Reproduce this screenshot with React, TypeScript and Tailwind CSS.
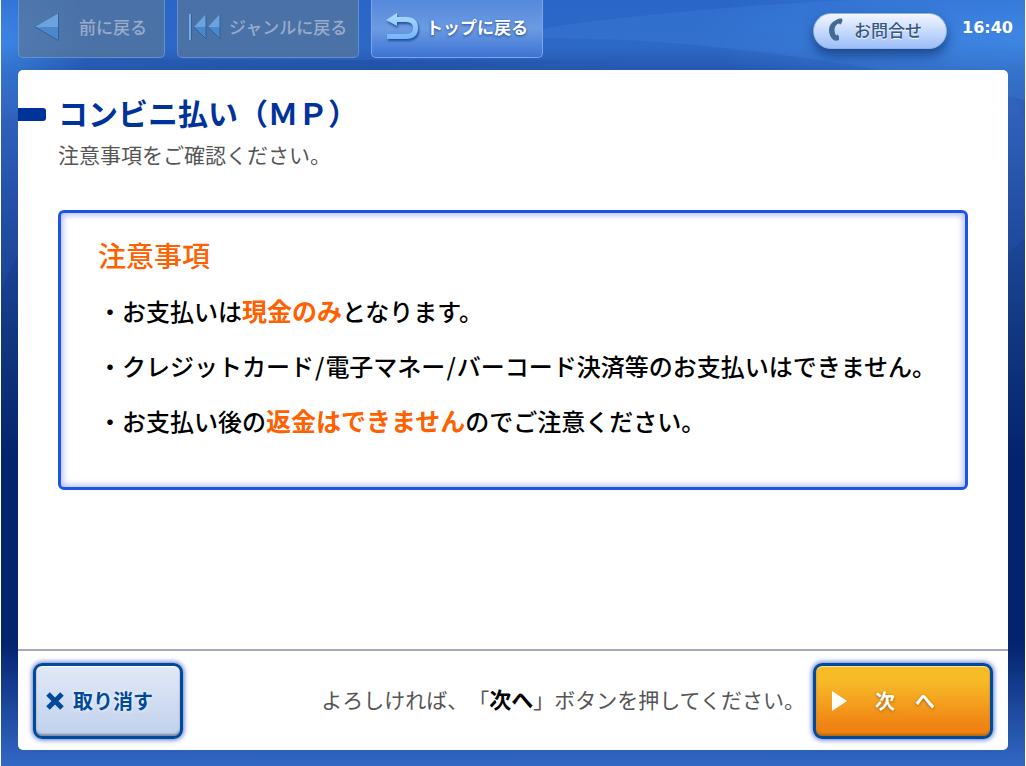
import React from "react";

const font = "font-['Noto_Sans_CJK_JP',sans-serif]";

function Backdrop() {
  return (
    <svg
      className="absolute inset-0 h-full w-full"
      viewBox="0 0 1024 766"
      preserveAspectRatio="none"
      aria-hidden="true"
    >
      <defs>
        <linearGradient id="bg" x1="0" y1="0" x2="0" y2="1">
          <stop offset="0" stopColor="#2a66c8" />
          <stop offset="0.06" stopColor="#2d68c6" />
          <stop offset="0.09" stopColor="#2659b0" />
          <stop offset="0.14" stopColor="#2f5fb9" />
          <stop offset="0.28" stopColor="#1f4a9e" />
          <stop offset="0.45" stopColor="#11357f" />
          <stop offset="0.6" stopColor="#04236f" />
          <stop offset="0.84" stopColor="#04236f" />
          <stop offset="0.97" stopColor="#2a5cb5" />
          <stop offset="1" stopColor="#3068c4" />
        </linearGradient>
        <radialGradient id="glow">
          <stop offset="0" stopColor="#4290f0" stopOpacity="0.7" />
          <stop offset="1" stopColor="#4290f0" stopOpacity="0" />
        </radialGradient>
        <linearGradient id="shade" x1="0" y1="0" x2="1" y2="0">
          <stop offset="0" stopColor="#1c4c9c" stopOpacity="0" />
          <stop offset="0.6" stopColor="#1c4c9c" stopOpacity="0.5" />
          <stop offset="1" stopColor="#1c4c9c" stopOpacity="0" />
        </linearGradient>
      </defs>
      <rect width="1024" height="766" fill="url(#bg)" />
      <ellipse cx="0" cy="40" rx="90" ry="80" fill="url(#glow)" />
      <ellipse cx="1024" cy="35" rx="330" ry="70" fill="url(#glow)" />
      <path d="M370 70 Q500 30 620 18 Q740 5 850 0 H1024 V100 Q760 38 540 38 Q440 50 370 70Z" fill="#4a8ce4" fillOpacity="0.22" />
      <path d="M0 45 Q70 58 200 60 H640 V70 H0 Z" fill="url(#shade)" />
      <path d="M0 292 Q8 270 17 256 V80 H0Z" fill="#4a8ce4" fillOpacity="0.08" />
      <path d="M1007 254 Q1016 246 1024 238 V120 L1007 82Z" fill="#4a8ce4" fillOpacity="0.08" />
    </svg>
  );
}

function BackIcon() {
  return (
    <svg className="h-7 w-6" viewBox="0 0 24 28" aria-hidden="true">
      <path d="M0 14 24 0V14Z" fill="#6ba3dc" />
      <path d="M0 14H24V28Z" fill="#4b87cb" />
      <path d="M23.5 0V27.5L0 14" fill="none" stroke="#315f9d" />
    </svg>
  );
}

function FirstIcon() {
  return (
    <svg className="h-7 w-8" viewBox="0 0 32 28" aria-hidden="true">
      <path d="M1 1V27" stroke="#73a9df" strokeWidth="2" />
      <path d="M2.5 1V27" stroke="#315f9d" />
      <path d="M5 14 17 1V14ZM19 14 31 1V14Z" fill="#6ba3dc" />
      <path d="M5 14H17V27ZM19 14H31V27Z" fill="#4b87cb" />
      <path d="M17 1V26L5 14M31 1V26L19 14" fill="none" stroke="#315f9d" />
    </svg>
  );
}

function ReturnIcon() {
  return (
    <svg className="h-7 w-8 drop-shadow-[1px_2px_1px_#234f9a]" viewBox="0 0 32 28" aria-hidden="true">
      <defs>
        <linearGradient id="ret" x1="0" y1="0" x2="0" y2="1">
          <stop offset="0" stopColor="#b0dcff" />
          <stop offset="1" stopColor="#74b4f8" />
        </linearGradient>
      </defs>
      <path
        d="M0 7 11 0V4H20Q32 4 32 15Q32 26 20 26H1V21H20Q27 21 27 15Q27 9 20 9H11V13Z"
        fill="url(#ret)"
      />
    </svg>
  );
}

function PhoneIcon() {
  return (
    <svg className="h-6 w-4" viewBox="0 0 16 24" fill="#426a94" aria-hidden="true">
      <path d="M9 1.5Q11 0 14 .5L14.5 3 13 6Q12 7 11 5.5L9.5 6Q6.5 8 6.5 12Q6.5 16 8 17.5L9.5 16.5 11 18.5V22Q8 23.5 5.5 22Q1 18 1 12Q1 5 9 1.5Z" />
    </svg>
  );
}

const tab = "flex h-[58px] items-center rounded-b-[5px] border border-t-0 pb-1 text-[17px] leading-6";
const dimTab = tab + " border-[#6f9fdd]/70 bg-[#5c7896]/65 font-medium text-[#9aaccb]";

export default function App() {
  return (
    <div className={`flex min-h-screen flex-col bg-white px-px [text-spacing-trim:space-all] ${font}`}>
      <div className="relative isolate flex flex-1 flex-col overflow-hidden px-[17px] pb-4">
        <div className="absolute inset-0 -z-10">
          <Backdrop />
        </div>

        <header className="flex h-[70px] items-start justify-between">
          <nav className="flex gap-3">
            <button className={`${dimTab} w-[147px] gap-5 pl-4`}>
              <BackIcon />
              前に戻る
            </button>
            <button className={`${dimTab} w-[182px] gap-2 pl-[11px]`}>
              <FirstIcon />
              ジャンルに戻る
            </button>
            <button
              className={`${tab} w-[172px] gap-2 border-[#7ba6ea] bg-linear-to-b from-[#5488da] via-[#6c9be2] to-[#3d73d4] pl-[14px] font-bold text-white [text-shadow:0_1px_3px_#1f4a96]`}
            >
              <ReturnIcon />
              トップに戻る
            </button>
          </nav>
          <div className="-mr-2 flex gap-[15px] pt-[13px]">
            <button className="flex h-9 w-[134px] items-center gap-[10px] rounded-full border border-[#8fb0e6] bg-linear-to-b from-[#f2f6ff] to-[#9dbef8] pb-[2px] pl-[14px] text-[17px] leading-6 font-medium text-[#34567f] shadow-[0_6px_12px_#1b468c] [text-shadow:0_1px_1px_#fff]">
              <PhoneIcon />
              お問合せ
            </button>
            <time className="pt-[3px] pr-[3px] font-['DejaVu_Sans',sans-serif] text-[16px] leading-6 font-bold text-white">16:40</time>
          </div>
        </header>

        <main className="flex flex-1 flex-col rounded-[5px] bg-white">
          <section className="flex-1 pt-6">
            <div className="flex items-center gap-3">
              <span className="mt-1 h-[13px] w-7 rounded-r-[3px] bg-[#003399]" />
              <h1 className="text-[30px] leading-9 font-bold text-[#003399]">コンビニ払い（ＭＰ）</h1>
            </div>
            <p className="mt-2 pl-10 text-[21px] leading-8 text-[#555]">注意事項をご確認ください。</p>
            <div className="mx-10 mt-10 min-h-[280px] rounded-[6px] border-3 border-[#1a55e8] px-[37px] pt-[22px] pb-9 shadow-[inset_0_0_6px_2px_#b4bcff]">
              <h2 className="text-[28px] leading-10 font-medium text-[#ff6000]">注意事項</h2>
              <ul className="mt-2 text-[24px] leading-[55px] font-medium whitespace-nowrap text-black">
                <li>
                  ・お支払いは<strong className="text-[25px] font-bold text-[#ff6000]">現金のみ</strong>となります。
                </li>
                <li>
                  ・クレジットカード<span className="px-px">/</span>電子マネー<span className="px-px">/</span>バーコード決済等のお支払いはできません。
                </li>
                <li>
                  ・お支払い後の<strong className="text-[25px] font-bold text-[#ff6000]">返金はできません</strong>のでご注意ください。
                </li>
              </ul>
            </div>
          </section>

          <footer className="flex h-[101px] items-center justify-between border-t-2 border-[#a3abbf] px-[15px]">
            <button className="flex h-[76px] w-[150px] items-center gap-2 rounded-[9px] border-3 border-[#004a9c] bg-linear-to-b from-[#e2e9f7] to-[#c0d0ec] pl-[9px] text-[20px] leading-7 font-bold text-[#004a9c] shadow-[0_0_5px_1px_#5d78c8,inset_0_-2px_2px_#7f8ba3,inset_0_1px_1px_#fff] [text-shadow:0_0_4px_#fff]">
              <svg className="h-5 w-5" viewBox="0 0 20 20" aria-hidden="true">
                <path d="M3 3 17 17M17 3 3 17" stroke="#004a9c" strokeWidth="5" />
              </svg>
              取り消す
            </button>
            <div className="flex items-center gap-2">
              <p className="pb-1 text-[21px] leading-8 whitespace-nowrap text-[#555]">
                よろしければ、「<strong className="text-[22px] font-bold text-black">次へ</strong>」ボタンを押してください。
              </p>
              <button className="flex h-[76px] w-[180px] items-center gap-7 rounded-[9px] border-3 border-[#004a9c] bg-linear-to-b from-[#f7bb28] from-20% to-[#f08313] to-85% pl-[15px] text-[20px] leading-7 font-bold text-white shadow-[0_0_5px_1px_#5d78c8,inset_0_-2px_2px_#b8690c,inset_0_1px_1px_#fbe3a0] [text-shadow:0_1px_3px_#a85a00]">
                <svg className="h-5 w-4" viewBox="0 0 16 20" aria-hidden="true">
                  <path d="M1 0 16 10 1 20Z" fill="#fff" />
                </svg>
                次　へ
              </button>
            </div>
          </footer>
        </main>
      </div>
    </div>
  );
}
